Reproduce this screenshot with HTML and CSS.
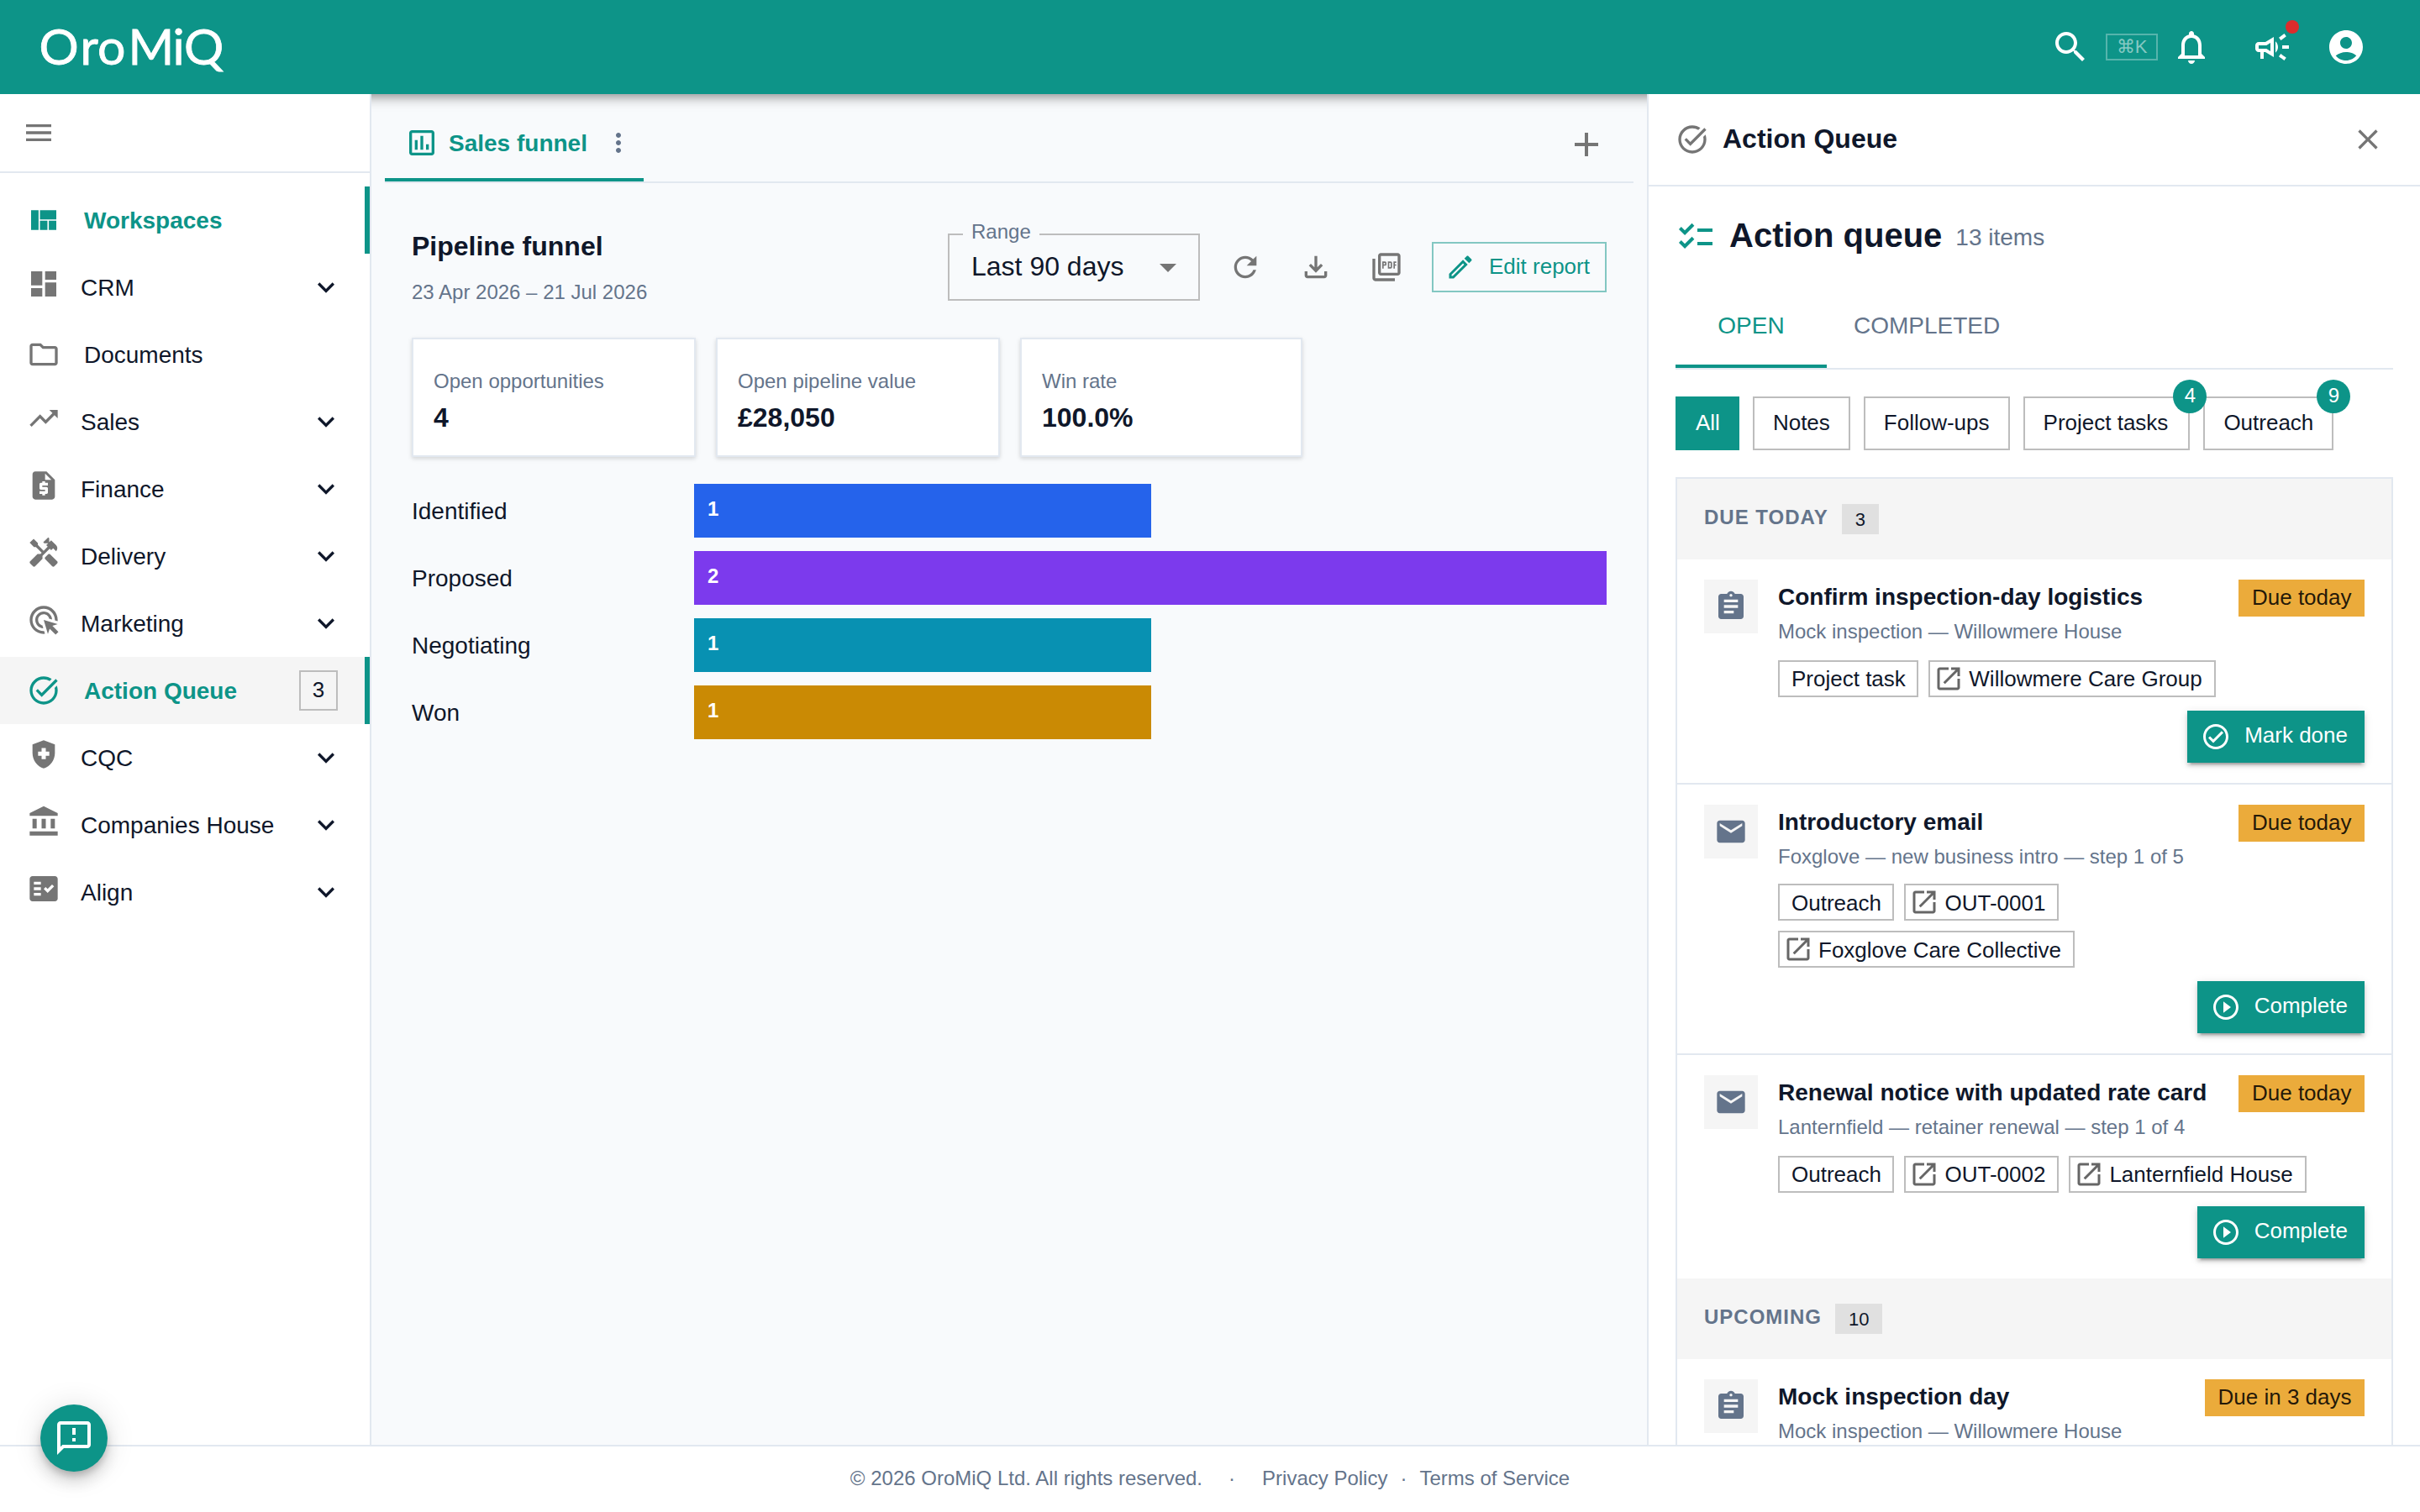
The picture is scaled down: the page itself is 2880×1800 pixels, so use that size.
FILE: index.html
```html
<!DOCTYPE html>
<html lang="en">
<head>
<meta charset="utf-8">
<title>OroMiQ - Workspaces</title>
<link rel="stylesheet" href="styles.css">
</head>
<body>

<!-- icon sprite, 24px grid -->
<svg class="sprite" width="0" height="0">
<symbol id="search" viewBox="0 0 24 24"><path d="M15.5 14h-.79l-.28-.27C15.41 12.59 16 11.11 16 9.5 16 5.91 13.09 3 9.5 3S3 5.91 3 9.5 5.91 16 9.5 16c1.61 0 3.09-.59 4.23-1.57l.27.28v.79l5 4.99L20.49 19zm-6 0C7.01 14 5 11.99 5 9.5S7.01 5 9.5 5 14 7.01 14 9.5 11.99 14 9.5 14"/></symbol>
<symbol id="bell" viewBox="0 0 24 24"><path d="M12 22c1.1 0 2-.9 2-2h-4c0 1.1.9 2 2 2m6-6v-5c0-3.07-1.63-5.64-4.5-6.32V4c0-.83-.67-1.5-1.5-1.5s-1.5.67-1.5 1.5v.68C7.64 5.36 6 7.92 6 11v5l-2 2v1h16v-1zm-2 1H8v-6c0-2.48 1.51-4.5 4-4.5s4 2.02 4 4.5z"/></symbol>
<symbol id="campaign" viewBox="0 0 24 24"><path d="M18 11v2h4v-2zm-2 6.61c.96.71 2.21 1.65 3.2 2.39.4-.53.8-1.07 1.2-1.6-.99-.74-2.24-1.68-3.2-2.4-.4.54-.8 1.08-1.2 1.61M20.4 5.6c-.4-.53-.8-1.07-1.2-1.6-.99.74-2.24 1.68-3.2 2.4.4.53.8 1.07 1.2 1.6.96-.72 2.21-1.65 3.2-2.4M4 9c-1.1 0-2 .9-2 2v2c0 1.1.9 2 2 2h1v4h2v-4h1l5 3V6L8 9zm5.03 1.71L11 9.53v4.94l-1.97-1.18-.48-.29H4v-2h4.55zM15.5 12c0-1.33-.58-2.53-1.5-3.35v6.69c.92-.81 1.5-2.01 1.5-3.34"/></symbol>
<symbol id="account" viewBox="0 0 24 24"><path d="M12 2C6.48 2 2 6.48 2 12s4.480 10 10 10 10-4.480 10-10S17.520 2 12 2m0 4c1.930 0 3.500 1.570 3.500 3.500S13.930 13 12 13s-3.500-1.570-3.500-3.500S10.070 6 12 6m0 14c-2.030 0-4.430-.820-6.140-2.880C7.550 15.800 9.680 15 12 15s4.450.800 6.140 2.120C16.430 19.180 14.030 20 12 20"/></symbol>
<symbol id="menu" viewBox="0 0 24 24"><path d="M3 18h18v-2H3zm0-5h18v-2H3zm0-7v2h18V6z"/></symbol>
<symbol id="quilt" viewBox="0 0 24 24"><path d="M21 5v6.500H9.330V5zm-6.330 14v-6.500H9.330V19zm1-6.500V19H21v-6.500zM8.330 19V5H3v14z"/></symbol>
<symbol id="dashboard" viewBox="0 0 24 24"><path d="M3 13h8V3H3zm0 8h8v-6H3zm10 0h8V11h-8zm0-18v6h8V3z"/></symbol>
<symbol id="folder" viewBox="0 0 24 24"><path d="m9.170 6 2 2H20v10H4V6zM10 4H4c-1.100 0-1.990.900-1.990 2L2 18c0 1.100.900 2 2 2h16c1.100 0 2-.900 2-2V8c0-1.100-.900-2-2-2h-8z"/></symbol>
<symbol id="trending" viewBox="0 0 24 24"><path d="m16 6 2.290 2.290-4.880 4.880-4-4L2 16.590 3.410 18l6-6 4 4 6.300-6.290L22 12V6z"/></symbol>
<symbol id="invoice" viewBox="0 0 24 24"><path d="M14 2H6c-1.100 0-1.990.900-1.990 2L4 20c0 1.100.890 2 1.990 2H18c1.100 0 2-.900 2-2V8zm1 10h-4v1h3c.550 0 1 .450 1 1v3c0 .550-.450 1-1 1h-1v1h-2v-1H9v-2h4v-1h-3c-.550 0-1-.450-1-1v-3c0-.550.450-1 1-1h1V9h2v1h2zm-2-4V3.500L17.500 8z"/></symbol>
<symbol id="handyman" viewBox="0 0 24 24"><path d="m21.670 18.170-5.300-5.300h-.990l-2.540 2.540v.990l5.300 5.300c.390.390 1.020.390 1.410 0l2.120-2.120c.390-.380.390-1.020 0-1.410"/><path d="m17.340 10.190 1.410-1.410 2.120 2.120c1.170-1.170 1.170-3.070 0-4.240l-3.540-3.540-1.410 1.410V1.710L15.220 1l-3.540 3.540.710.710h2.830l-1.410 1.410 1.060 1.060-2.890 2.890-4.130-4.130V5.060L4.830 2.040 2 4.870 5.030 7.900h1.410l4.130 4.130-.850.850H7.600l-5.300 5.300c-.390.390-.390 1.020 0 1.410l2.120 2.120c.390.390 1.020.390 1.410 0l5.300-5.300v-2.120l5.150-5.150z"/></symbol>
<symbol id="adsclick" viewBox="0 0 24 24"><path d="M11.710 17.990C8.530 17.840 6 15.220 6 12c0-3.310 2.690-6 6-6 3.220 0 5.840 2.530 5.990 5.710l-2.100-.630C15.480 9.310 13.890 8 12 8c-2.210 0-4 1.790-4 4 0 1.890 1.310 3.480 3.080 3.890zM22 12c0 .300-.010.600-.040.900l-1.970-.590c.010-.100.010-.210.010-.310 0-4.420-3.580-8-8-8s-8 3.580-8 8 3.580 8 8 8c.100 0 .210 0 .310-.010l.590 1.970c-.300.030-.600.040-.900.040-5.520 0-10-4.480-10-10S6.480 2 12 2s10 4.480 10 10m-3.770 4.260L22 15l-10-3 3 10 1.260-3.770 4.270 4.270 1.980-1.980z"/></symbol>
<symbol id="taskalt" viewBox="0 0 24 24"><path d="M22 5.180 10.590 16.600l-4.240-4.240 1.410-1.410 2.830 2.830 10-10zm-2.210 5.040c.130.570.210 1.170.210 1.780 0 4.420-3.580 8-8 8s-8-3.580-8-8 3.580-8 8-8c1.580 0 3.040.460 4.280 1.250l1.440-1.440C16.100 2.670 14.130 2 12 2 6.480 2 2 6.480 2 12s4.480 10 10 10 10-4.480 10-10c0-1.190-.220-2.330-.600-3.390z"/></symbol>
<symbol id="shield" viewBox="0 0 24 24"><path d="m10.500 13H8v-3h2.500V7.500h3V10H16v3h-2.500v2.500h-3zM12 2 4 5v6.090c0 5.050 3.410 9.760 8 10.910 4.590-1.150 8-5.860 8-10.910V5z" fill-rule="evenodd"/></symbol>
<symbol id="bank" viewBox="0 0 24 24"><path d="M4 10h3v7H4zm6.500 0h3v7h-3zM2 19h20v3H2zm15-9h3v7h-3zm-5-9L2 6v2h20V6z"/></symbol>
<symbol id="factcheck" viewBox="0 0 24 24"><path fill-rule="evenodd" d="M20 3H4c-1.100 0-2 .900-2 2v14c0 1.100.900 2 2 2h16c1.100 0 2-.900 2-2V5c0-1.100-.900-2-2-2M10 17H5v-2h5zm0-4H5v-2h5zm0-4H5V7h5zm4.820 6L12 12.160l1.410-1.410 1.410 1.420L17.990 9l1.420 1.420z"/></symbol>
<symbol id="chevron" viewBox="0 0 24 24"><path d="M16.590 8.590 12 13.170 7.410 8.590 6 10l6 6 6-6z"/></symbol>
<symbol id="chart" viewBox="0 0 24 24"><path d="M9 17H7v-7h2zm4 0h-2V7h2zm4 0h-2v-4h2zm2 2H5V5h14zm0-16H5c-1.100 0-2 .900-2 2v14c0 1.100.900 2 2 2h14c1.100 0 2-.900 2-2V5c0-1.100-.900-2-2-2"/></symbol>
<symbol id="more" viewBox="0 0 24 24"><path d="M12 8c1.100 0 2-.900 2-2s-.900-2-2-2-2 .900-2 2 .900 2 2 2m0 2c-1.100 0-2 .900-2 2s.900 2 2 2 2-.900 2-2-.900-2-2-2m0 6c-1.100 0-2 .900-2 2s.900 2 2 2 2-.900 2-2-.900-2-2-2"/></symbol>
<symbol id="plus" viewBox="0 0 24 24"><path d="M19 13h-6v6h-2v-6H5v-2h6V5h2v6h6z"/></symbol>
<symbol id="dropdown" viewBox="0 0 24 24"><path d="m7 10 5 5 5-5z"/></symbol>
<symbol id="refresh" viewBox="0 0 24 24"><path d="M17.650 6.350C16.200 4.900 14.210 4 12 4c-4.420 0-7.990 3.580-7.990 8s3.570 8 7.990 8c3.730 0 6.840-2.550 7.730-6h-2.080c-.820 2.330-3.040 4-5.650 4-3.310 0-6-2.690-6-6s2.690-6 6-6c1.660 0 3.140.690 4.220 1.780L13 11h7V4z"/></symbol>
<symbol id="download" viewBox="0 0 24 24"><path d="M18 15v3H6v-3H4v3c0 1.100.900 2 2 2h12c1.100 0 2-.900 2-2v-3zm-1-4-1.410-1.410L13 12.170V4h-2v8.170L8.410 9.590 7 11l5 5z"/></symbol>
<symbol id="pdf" viewBox="0 0 24 24"><path d="M20 2H8c-1.100 0-2 .900-2 2v12c0 1.100.900 2 2 2h12c1.100 0 2-.900 2-2V4c0-1.100-.900-2-2-2m0 14H8V4h12zM4 6H2v14c0 1.100.900 2 2 2h14v-2H4zm12 6V9c0-.550-.450-1-1-1h-2v5h2c.550 0 1-.450 1-1m-2-3h1v3h-1zm4 2h1v-1h-1V9h1V8h-2v5h1zm-8 0h1c.550 0 1-.450 1-1V9c0-.550-.450-1-1-1H9v5h1zm0-2h1v1h-1z"/></symbol>
<symbol id="edit" viewBox="0 0 24 24"><path d="m14.060 9.020.920.920L5.920 19H5v-.920zM17.660 3c-.250 0-.510.100-.700.290l-1.830 1.830 3.750 3.750 1.830-1.830c.390-.390.390-1.020 0-1.410l-2.340-2.340c-.200-.200-.450-.290-.710-.290m-3.600 3.190L3 17.250V21h3.750L17.810 9.940z"/></symbol>
<symbol id="close" viewBox="0 0 24 24"><path d="M19 6.410 17.590 5 12 10.590 6.410 5 5 6.410 10.590 12 5 17.590 6.410 19 12 13.410 17.590 19 19 17.590 13.410 12z"/></symbol>
<symbol id="checklist" viewBox="0 0 24 24"><path d="M22 7h-9v2h9zm0 8h-9v2h9zM5.540 11 2 7.460l1.410-1.410 2.120 2.120 4.240-4.240 1.410 1.410zm0 8L2 15.460l1.410-1.410 2.120 2.120 4.240-4.240 1.410 1.410z"/></symbol>
<symbol id="assignment" viewBox="0 0 24 24"><path d="M19 3h-4.180C14.400 1.840 13.300 1 12 1s-2.400.840-2.820 2H5c-1.100 0-2 .900-2 2v14c0 1.100.900 2 2 2h14c1.100 0 2-.900 2-2V5c0-1.100-.900-2-2-2m-7 0c.550 0 1 .450 1 1s-.450 1-1 1-1-.450-1-1 .450-1 1-1m2 14H7v-2h7zm3-4H7v-2h10zm0-4H7V7h10z"/></symbol>
<symbol id="mail" viewBox="0 0 24 24"><path d="M20 4H4c-1.100 0-1.990.900-1.990 2L2 18c0 1.100.900 2 2 2h16c1.100 0 2-.900 2-2V6c0-1.100-.900-2-2-2m0 4-8 5-8-5V6l8 5 8-5z"/></symbol>
<symbol id="opennew" viewBox="0 0 24 24"><path d="M19 19H5V5h7V3H5c-1.110 0-2 .900-2 2v14c0 1.100.890 2 2 2h14c1.100 0 2-.900 2-2v-7h-2zM14 3v2h3.590l-9.830 9.830 1.410 1.410L19 6.410V10h2V3z"/></symbol>
<symbol id="checkcircle" viewBox="0 0 24 24"><path d="M12 2C6.480 2 2 6.480 2 12s4.480 10 10 10 10-4.480 10-10S17.520 2 12 2m0 18c-4.410 0-8-3.590-8-8s3.590-8 8-8 8 3.590 8 8-3.590 8-8 8m4.590-12.420L10 14.170l-2.590-2.580L6 13l4 4 8-8z"/></symbol>
<symbol id="play" viewBox="0 0 24 24"><path d="m10 16.500 6-4.500-6-4.500zM12 2C6.480 2 2 6.480 2 12s4.480 10 10 10 10-4.480 10-10S17.520 2 12 2m0 18c-4.410 0-8-3.590-8-8s3.590-8 8-8 8 3.590 8 8-3.590 8-8 8"/></symbol>
<symbol id="feedback" viewBox="0 0 24 24"><path d="M20 2H4c-1.100 0-1.990.900-1.990 2L2 22l4-4h14c1.100 0 2-.900 2-2V4c0-1.100-.900-2-2-2m0 14H5.170l-.590.590-.580.580V4h16zm-9-4h2v2h-2zm0-6h2v4h-2z"/></symbol>
</svg>

<header class="appbar">
	<svg class="logo" width="230" height="88" viewBox="0 -12 230 88"><text y="53" x="-1.500 47.500 68 104.500 157.500 171">OroMiQ</text></svg>
	<div class="tools">
		<svg class="i48"><use href="#search"/></svg>
		<span class="kbd">⌘K</span>
		<svg class="i48 bell"><use href="#bell"/></svg>
		<span class="news"><svg class="i48"><use href="#campaign"/></svg><i class="dot"></i></span>
		<svg class="i48"><use href="#account"/></svg>
	</div>
</header>

<div class="shell">
<nav class="sidebar">
	<div class="toggle"><svg class="i40"><use href="#menu"/></svg></div>
	<ul class="menu">
		<li class="on"><svg class="i40"><use href="#quilt"/></svg><span>Workspaces</span></li>
		<li class="group"><svg class="i40"><use href="#dashboard"/></svg><span>CRM</span><svg class="i40 arrow"><use href="#chevron"/></svg></li>
		<li><svg class="i40"><use href="#folder"/></svg><span>Documents</span></li>
		<li class="group"><svg class="i40"><use href="#trending"/></svg><span>Sales</span><svg class="i40 arrow"><use href="#chevron"/></svg></li>
		<li class="group"><svg class="i40"><use href="#invoice"/></svg><span>Finance</span><svg class="i40 arrow"><use href="#chevron"/></svg></li>
		<li class="group"><svg class="i40"><use href="#handyman"/></svg><span>Delivery</span><svg class="i40 arrow"><use href="#chevron"/></svg></li>
		<li class="group"><svg class="i40"><use href="#adsclick"/></svg><span>Marketing</span><svg class="i40 arrow"><use href="#chevron"/></svg></li>
		<li class="on current"><svg class="i40"><use href="#taskalt"/></svg><span>Action Queue</span><b class="count">3</b></li>
		<li class="group"><svg class="i40"><use href="#shield"/></svg><span>CQC</span><svg class="i40 arrow"><use href="#chevron"/></svg></li>
		<li class="group"><svg class="i40"><use href="#bank"/></svg><span>Companies House</span><svg class="i40 arrow"><use href="#chevron"/></svg></li>
		<li class="group"><svg class="i40"><use href="#factcheck"/></svg><span>Align</span><svg class="i40 arrow"><use href="#chevron"/></svg></li>
	</ul>
</nav>

<main class="main">
	<div class="tabs">
		<div class="tab"><svg class="i40"><use href="#chart"/></svg><span>Sales funnel</span><svg class="i36 more"><use href="#more"/></svg></div>
		<svg class="i48 add"><use href="#plus"/></svg>
	</div>

	<div class="report">
		<div class="head">
			<div class="title">
				<h1>Pipeline funnel</h1>
				<p>23 Apr 2026 – 21 Jul 2026</p>
			</div>
			<div class="actions">
				<div class="select"><label>Range</label><span>Last 90 days</span><svg class="i48"><use href="#dropdown"/></svg></div>
				<svg class="i40 act"><use href="#refresh"/></svg>
				<svg class="i40 act"><use href="#download"/></svg>
				<svg class="i40 act"><use href="#pdf"/></svg>
				<button class="edit"><svg class="i36"><use href="#edit"/></svg><span>Edit report</span></button>
			</div>
		</div>

		<div class="cards">
			<div class="card"><p>Open opportunities</p><strong>4</strong></div>
			<div class="card"><p>Open pipeline value</p><strong>£28,050</strong></div>
			<div class="card"><p>Win rate</p><strong>100.0%</strong></div>
		</div>

		<div class="funnel">
			<div class="stage"><span>Identified</span><div class="track"><div class="bar blue" style="width:50.1%">1</div></div></div>
			<div class="stage"><span>Proposed</span><div class="track"><div class="bar purple" style="width:100%">2</div></div></div>
			<div class="stage"><span>Negotiating</span><div class="track"><div class="bar cyan" style="width:50.1%">1</div></div></div>
			<div class="stage"><span>Won</span><div class="track"><div class="bar amber" style="width:50.1%">1</div></div></div>
		</div>
	</div>
</main>

<aside class="panel">
	<div class="panel-head"><svg class="i40"><use href="#taskalt"/></svg><h2>Action Queue</h2><svg class="i40"><use href="#close"/></svg></div>
	<div class="panel-body">
		<div class="queue-title"><svg class="i48"><use href="#checklist"/></svg><h3>Action queue</h3><span>13 items</span></div>
		<div class="queue-tabs"><span class="sel">OPEN</span><span>COMPLETED</span></div>
		<div class="filters">
			<span class="sel">All</span>
			<span>Notes</span>
			<span>Follow-ups</span>
			<span class="wide">Project tasks<i>4</i></span>
			<span>Outreach<i>9</i></span>
		</div>

		<div class="list">
			<div class="section"><span>DUE TODAY</span><b>3</b></div>

			<div class="item">
				<div class="avatar"><svg class="i40"><use href="#assignment"/></svg></div>
				<div class="info">
					<h4>Confirm inspection-day logistics</h4>
					<p>Mock inspection — Willowmere House</p>
				</div>
				<span class="due">Due today</span>
				<div class="chips">
					<span class="chip">Project task</span>
					<span class="chip link"><svg class="i36"><use href="#opennew"/></svg>Willowmere Care Group</span>
				</div>
				<button class="go"><svg class="i36"><use href="#checkcircle"/></svg><span>Mark done</span></button>
			</div>

			<div class="item">
				<div class="avatar"><svg class="i40"><use href="#mail"/></svg></div>
				<div class="info">
					<h4>Introductory email</h4>
					<p>Foxglove — new business intro — step 1 of 5</p>
				</div>
				<span class="due">Due today</span>
				<div class="chips two">
					<span class="chip">Outreach</span>
					<span class="chip link"><svg class="i36"><use href="#opennew"/></svg>OUT-0001</span>
					<span class="chip link"><svg class="i36"><use href="#opennew"/></svg>Foxglove Care Collective</span>
				</div>
				<button class="go"><svg class="i36"><use href="#play"/></svg><span>Complete</span></button>
			</div>

			<div class="item last">
				<div class="avatar"><svg class="i40"><use href="#mail"/></svg></div>
				<div class="info">
					<h4>Renewal notice with updated rate card</h4>
					<p>Lanternfield — retainer renewal — step 1 of 4</p>
				</div>
				<span class="due">Due today</span>
				<div class="chips">
					<span class="chip">Outreach</span>
					<span class="chip link"><svg class="i36"><use href="#opennew"/></svg>OUT-0002</span>
					<span class="chip link"><svg class="i36"><use href="#opennew"/></svg>Lanternfield House</span>
				</div>
				<button class="go"><svg class="i36"><use href="#play"/></svg><span>Complete</span></button>
			</div>

			<div class="section"><span>UPCOMING</span><b>10</b></div>

			<div class="item">
				<div class="avatar"><svg class="i40"><use href="#assignment"/></svg></div>
				<div class="info">
					<h4>Mock inspection day</h4>
					<p>Mock inspection — Willowmere House</p>
				</div>
				<span class="due">Due in 3 days</span>
			</div>
		</div>
	</div>
</aside>
</div>

<footer class="footer">
	<span>© 2026 OroMiQ Ltd. All rights reserved.</span><span class="sep">·</span><span>Privacy Policy</span><span class="sep small">·</span><span>Terms of Service</span>
</footer>

<button class="fab"><svg class="i48"><use href="#feedback"/></svg></button>

</body>
</html>
```
FILE: styles.css
```css
*{box-sizing:border-box}

body{
	margin:0;
	width:2880px;
	height:1800px;
	display:flex;
	flex-direction:column;
	overflow:hidden;
	background:#fff;
	color:#0f172a;
	font-family:"Liberation Sans", Arial, Helvetica, sans-serif;
	font-size:28px;
}

h1, h2, h3, h4, p, ul{margin:0; padding:0}
ul{list-style:none}
button{font:inherit; border:0; margin:0}
svg{fill:currentColor; flex:none; display:block}
.sprite{position:absolute}
.i36{width:36px; height:36px}
.i40{width:40px; height:40px}
.i48{width:48px; height:48px}

/* app bar */
.appbar{
	height:112px;
	flex:none;
	display:flex;
	align-items:center;
	justify-content:space-between;
	padding:0 64px 0 48px;
	background:#0d9488;
	color:#fff;
	position:relative;
	z-index:1;
	box-shadow:0 4px 8px -2px rgba(0,0,0,.2), 0 8px 10px rgba(0,0,0,.14), 0 2px 20px rgba(0,0,0,.12);
}
.logo{overflow:visible}
.logo text{
	font-family:Lato, sans-serif;
	font-size:59px;
	stroke:#fff;
	stroke-width:.8px;
}
.tools{display:flex; align-items:center}
.kbd{
	width:62px;
	height:32px;
	margin:0 16px 0 18px;
	border:2px solid rgba(255,255,255,.3);
	color:rgba(255,255,255,.5);
	font-size:22px;
	line-height:28px;
	text-align:center;
}
.bell{margin-right:48px}
.news{position:relative; margin-right:40px}
.news .dot{
	position:absolute;
	top:-8px;
	right:-8px;
	width:16px;
	height:16px;
	border-radius:50%;
	background:#dc2c2c;
}

.shell{
	flex:1;
	min-height:0;
	display:flex;
}

/* sidebar */
.sidebar{
	width:442px;
	flex:none;
	background:#fff;
	border-right:2px solid #e2e8f0;
	position:relative;
	z-index:2;
}
.toggle{
	height:94px;
	padding:26px;
	border-bottom:2px solid #e2e8f0;
	color:#757575;
}
.menu{padding-top:16px}
.menu li{
	height:80px;
	display:flex;
	align-items:center;
	padding:0 32px;
	border-right:6px solid transparent;
}
.menu li > svg{color:#757575}
.menu li span{flex:1; padding:2px 0 0 28px; white-space:nowrap}
.menu .group span{padding-left:24px}
.menu .group > svg:first-child{margin-top:-8px}
.menu li > svg.arrow{color:#0f172a; margin-right:-6px}
.menu .on{border-right-color:#0d9488}
.menu .on span{font-weight:bold; color:#0d9488}
.menu .on > svg{color:#0d9488}
.menu .current{background:#f5f5f5}
.count{
	width:46px;
	height:48px;
	border:2px solid #bdbdbd;
	font-size:26px;
	font-weight:normal;
	line-height:43px;
	text-align:center;
}

/* workspace */
.main{
	width:1518px;
	flex:none;
	background:#f8fafc;
	padding:0 16px;
}
.tabs{
	height:106px;
	display:flex;
	justify-content:space-between;
	border-bottom:2px solid #e2e8f0;
}
.tab{
	width:308px;
	display:flex;
	align-items:center;
	padding:16px 12px 0 24px;
	border-bottom:4px solid #0d9488;
	color:#0d9488;
	font-weight:bold;
}
.tab span{flex:1; padding:1px 0 0 12px; white-space:nowrap}
.more{color:#64748b}
.add{margin:36px 32px 0 0; color:#757575}

.report{padding:0 32px}
.head{
	height:184px;
	display:flex;
	justify-content:space-between;
}
.title{padding-top:55px}
.title h1{font-size:32px; line-height:40px}
.title p{
	font-size:24px;
	line-height:32px;
	margin-top:19px;
	color:#64748b;
}
.actions{
	height:80px;
	margin-top:60px;
	display:flex;
	align-items:center;
}
.select{
	width:300px;
	height:80px;
	margin-right:34px;
	padding:0 12px 0 26px;
	border:2px solid #bdbdbd;
	display:flex;
	align-items:center;
	justify-content:space-between;
	font-size:32px;
	position:relative;
}
.select span{margin-top:-2px}
.select svg{color:#757575}
.select label{
	position:absolute;
	left:16px;
	top:-20px;
	padding:0 10px;
	background:#f8fafc;
	color:#64748b;
	font-size:24px;
	line-height:32px;
}
.act{color:#757575; margin-right:44px}
.act + .act + .act{margin-right:34px}
.edit{
	width:208px;
	height:60px;
	padding:0 0 0 14px;
	display:flex;
	align-items:center;
	background:none;
	border:2px solid rgba(13,148,136,.5);
	color:#0d9488;
	font-size:26px;
	white-space:nowrap;
}
.edit span, .go span{margin:-4px 0 0 16px}
.edit span{margin-top:-1px}

.cards{
	display:grid;
	grid-template-columns:338px 338px 336px;
	gap:24px;
}
.card{
	height:142px;
	padding:36px 24px 0;
	background:#fff;
	border:2px solid #e2e8f0;
	box-shadow:0 2px 6px rgba(0,0,0,.1), 0 2px 4px rgba(0,0,0,.06);
}
.card p{font-size:24px; line-height:28px; color:#64748b}
.card strong{display:block; font-size:32px; line-height:40px; margin-top:9px}

.funnel{
	margin-top:32px;
	display:grid;
	gap:16px;
}
.stage{display:flex; align-items:center; height:64px}
.stage span{width:336px; flex:none; padding-top:2px}
.track{flex:1}
.bar{
	height:64px;
	padding-left:16px;
	color:#fff;
	font-size:24px;
	font-weight:bold;
	line-height:59px;
}
.blue{background:#2563eb}
.purple{background:#7c3aed}
.cyan{background:#0891b2}
.amber{background:#ca8a04}

/* action queue panel */
.panel{
	flex:1;
	background:#fff;
	border-left:2px solid #e2e8f0;
	position:relative;
	z-index:2;
	display:flex;
	flex-direction:column;
	overflow:hidden;
}
.panel-head{
	height:110px;
	flex:none;
	display:flex;
	align-items:center;
	padding:0 42px 0 32px;
	border-bottom:2px solid #e2e8f0;
	color:#757575;
}
.panel-head h2{
	flex:1;
	margin:-2px 0 0 16px;
	font-size:32px;
	color:#0f172a;
}
.panel-body{padding:0 32px}
.queue-title{
	height:120px;
	display:flex;
	align-items:center;
}
.queue-title svg{color:#0d9488}
.queue-title h3{font-size:40px; margin:-3px 16px 0 16px}
.queue-title span{color:#64748b; margin-top:1px}
.queue-tabs{
	height:98px;
	display:flex;
	border-bottom:2px solid #e2e8f0;
	color:#64748b;
}
.queue-tabs span{padding:0 32px; line-height:92px}
.queue-tabs .sel{
	width:180px;
	padding:0;
	text-align:center;
	color:#0d9488;
	border-bottom:4px solid #0d9488;
}
.filters{
	display:flex;
	gap:16px;
	margin:32px 0;
	font-size:26px;
}
.filters span{
	height:64px;
	padding:0 22px;
	border:2px solid #bdbdbd;
	line-height:58px;
	position:relative;
}
.filters .sel{
	padding:0 21px 0 22px;
	background:#0d9488;
	border-color:#0d9488;
	color:#fff;
}
.filters .wide{padding-right:24px}
.filters i{
	position:absolute;
	top:-22px;
	right:-22px;
	width:40px;
	height:40px;
	border-radius:50%;
	background:#0d9488;
	color:#fff;
	font-size:24px;
	font-style:normal;
	line-height:38px;
	text-align:center;
	z-index:1;
}

.list{width:854px; border:2px solid #e2e8f0}
.section{
	height:96px;
	display:flex;
	align-items:center;
	padding:0 32px;
	background:#f5f5f5;
}
.section span{
	font-size:24px;
	font-weight:bold;
	letter-spacing:1px;
	color:#64748b;
	margin-top:-5px;
}
.section b{
	height:36px;
	margin-left:16px;
	padding:0 16px;
	background:#e0e0e0;
	font-size:22px;
	font-weight:normal;
	line-height:37px;
}
.item{
	display:grid;
	grid-template-columns:64px 1fr auto;
	column-gap:24px;
	padding:24px 32px;
	border-bottom:2px solid #e2e8f0;
}
.item.last{border-bottom:0}
.avatar{
	width:64px;
	height:64px;
	padding:12px;
	background:#f5f5f5;
	color:#64748b;
}
.info{min-width:0}
.info h4{
	font-size:28px;
	line-height:42px;
	white-space:nowrap;
}
.info p{
	font-size:24px;
	line-height:40px;
	color:#64748b;
	white-space:nowrap;
}
.chips{
	grid-column:2 / -1;
	display:flex;
	flex-wrap:wrap;
	gap:12px;
	margin-top:14px;
}
.chips.two{margin-top:12px}
.chip{
	height:44px;
	padding:0 14px;
	border:2px solid #bdbdbd;
	font-size:26px;
	line-height:40px;
	white-space:nowrap;
}
.chips.two .chip{line-height:42px}
.link{
	display:flex;
	padding-left:4px;
}
.link svg{color:#666; margin:2px 6px 0 0}
.chip:first-child{padding-right:13.500px}
.due{
	height:44px;
	padding:0 16px;
	background:#ebab3b;
	color:rgba(0,0,0,.87);
	font-size:26px;
	line-height:42px;
	padding:0 15.500px;
}
.go{
	grid-column:1 / -1;
	justify-self:end;
	height:62px;
	margin-top:16px;
	padding:0 20px 0 16px;
	display:flex;
	align-items:center;
	background:#0d9488;
	color:#fff;
	font-size:26px;
	box-shadow:0 6px 2px -4px rgba(0,0,0,.2), 0 4px 4px rgba(0,0,0,.14), 0 2px 10px rgba(0,0,0,.12);
}

.footer{
	height:80px;
	flex:none;
	display:flex;
	align-items:center;
	justify-content:center;
	padding-bottom:2px;
	border-top:2px solid #e2e8f0;
	background:#fff;
	color:#64748b;
	font-size:24px;
	position:relative;
	z-index:3;
}
.sep{margin:0 32px 0 31px}
.sep.small{margin:0 15px}

.fab{
	position:fixed;
	left:48px;
	top:1672px;
	width:80px;
	height:80px;
	padding:16px;
	border-radius:50%;
	background:#0d9488;
	color:#fff;
	z-index:4;
	box-shadow:0 6px 10px -2px rgba(0,0,0,.2), 0 12px 20px rgba(0,0,0,.14), 0 2px 36px rgba(0,0,0,.12);
}
```
